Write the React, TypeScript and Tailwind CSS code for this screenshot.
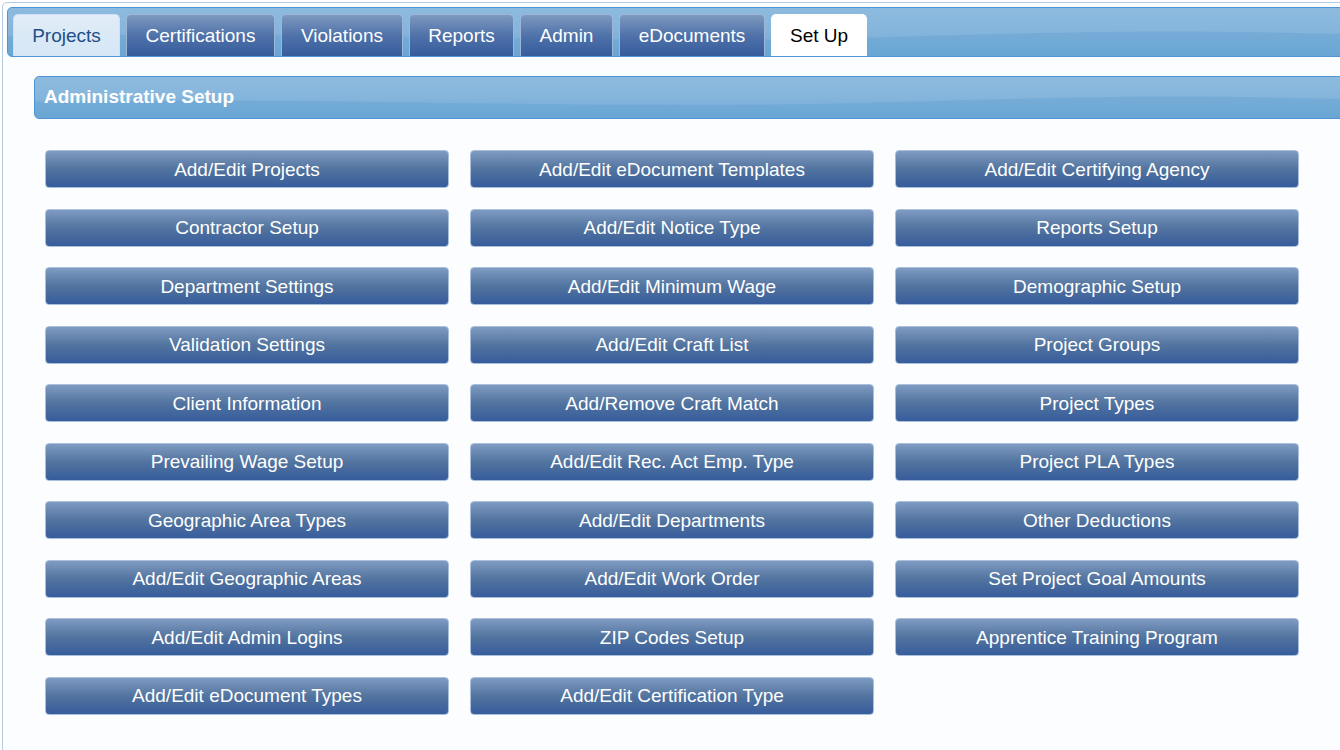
import React from "react";

const TABS = [
  { label: "Projects", width: "w-[107px]", kind: "light" },
  { label: "Certifications", width: "w-[149px]", kind: "dark" },
  { label: "Violations", width: "w-[122px]", kind: "dark" },
  { label: "Reports", width: "w-[105px]", kind: "dark" },
  { label: "Admin", width: "w-[93px]", kind: "dark" },
  { label: "eDocuments", width: "w-[146px]", kind: "dark" },
  { label: "Set Up", width: "w-[96px]", kind: "active" },
];

const BUTTONS = [
  "Add/Edit Projects",
  "Add/Edit eDocument Templates",
  "Add/Edit Certifying Agency",
  "Contractor Setup",
  "Add/Edit Notice Type",
  "Reports Setup",
  "Department Settings",
  "Add/Edit Minimum Wage",
  "Demographic Setup",
  "Validation Settings",
  "Add/Edit Craft List",
  "Project Groups",
  "Client Information",
  "Add/Remove Craft Match",
  "Project Types",
  "Prevailing Wage Setup",
  "Add/Edit Rec. Act Emp. Type",
  "Project PLA Types",
  "Geographic Area Types",
  "Add/Edit Departments",
  "Other Deductions",
  "Add/Edit Geographic Areas",
  "Add/Edit Work Order",
  "Set Project Goal Amounts",
  "Add/Edit Admin Logins",
  "ZIP Codes Setup",
  "Apprentice Training Program",
  "Add/Edit eDocument Types",
  "Add/Edit Certification Type",
];

function Tab({ label, width, kind }: { label: string; width: string; kind: string }) {
  const styles =
    kind === "active"
      ? "bg-white text-black border-white"
      : kind === "light"
      ? "bg-gradient-to-b from-[#e1edf8] to-[#d5e6f5] text-[#1e4f86] border-[#cfe1f2]"
      : "bg-gradient-to-b from-[#7f99bf] via-[#4f72a9] to-[#365c9c] text-white border-[#9db6d6]";
  return (
    <div
      className={`${width} ${styles} h-[42px] flex items-center justify-center rounded-t-[5px] border border-b-0 text-[19px] leading-none`}
    >
      {label}
    </div>
  );
}

export default function App() {
  return (
    <div className="w-full h-screen overflow-hidden bg-white font-['Liberation_Sans',Arial,sans-serif]">
      <div className="ml-[2px] mt-[2px] w-[1400px] h-[800px] border border-[#b5cbe0] rounded-[5px] bg-[#fbfdfe] p-[4px]">
        {/* Tab bar */}
        <div className="relative h-[50px] border border-[#4f94d6] rounded-[5px] overflow-hidden bg-gradient-to-b from-[#8dbbdf] via-[#86b5dc] to-[#6aa6d4]">
          <svg className="absolute inset-0 w-full h-full" preserveAspectRatio="none" viewBox="0 0 1400 50">
            <path d="M0 30 C 300 22, 600 40, 900 30 S 1250 26, 1400 28 L1400 50 L0 50 Z" fill="#6aa6d4" opacity="0.55" />
          </svg>
          <div className="relative flex items-end gap-[6px] pl-[5px] pt-[6px] h-full">
            {TABS.map((t) => (
              <Tab key={t.label} {...t} />
            ))}
          </div>
        </div>

        {/* Section header */}
        <div className="relative ml-[27px] mt-[19px] h-[43px] border border-[#4f94d6] rounded-l-[5px] overflow-hidden bg-gradient-to-b from-[#8dbbdf] via-[#86b5dc] to-[#6aa6d4]">
          <svg className="absolute inset-0 w-full h-full" preserveAspectRatio="none" viewBox="0 0 1400 43">
            <path d="M0 26 C 300 20, 600 36, 900 26 S 1250 22, 1400 24 L1400 43 L0 43 Z" fill="#6aa6d4" opacity="0.55" />
          </svg>
          <div className="relative h-full flex items-center pl-[9px] text-white font-bold text-[19px]">
            Administrative Setup
          </div>
        </div>

        {/* Buttons */}
        <div className="ml-[38px] mt-[31px] grid grid-cols-[404px_404px_404px] gap-x-[21px] gap-y-[20.5px]">
          {BUTTONS.map((b) => (
            <button
              key={b}
              className="h-[38px] rounded-[4px] border border-[#a9bfdc] bg-gradient-to-b from-[#7f9bc2] via-[#52749f] to-[#375c9c] text-white text-[19px] leading-none"
            >
              {b}
            </button>
          ))}
        </div>
      </div>
    </div>
  );
}
